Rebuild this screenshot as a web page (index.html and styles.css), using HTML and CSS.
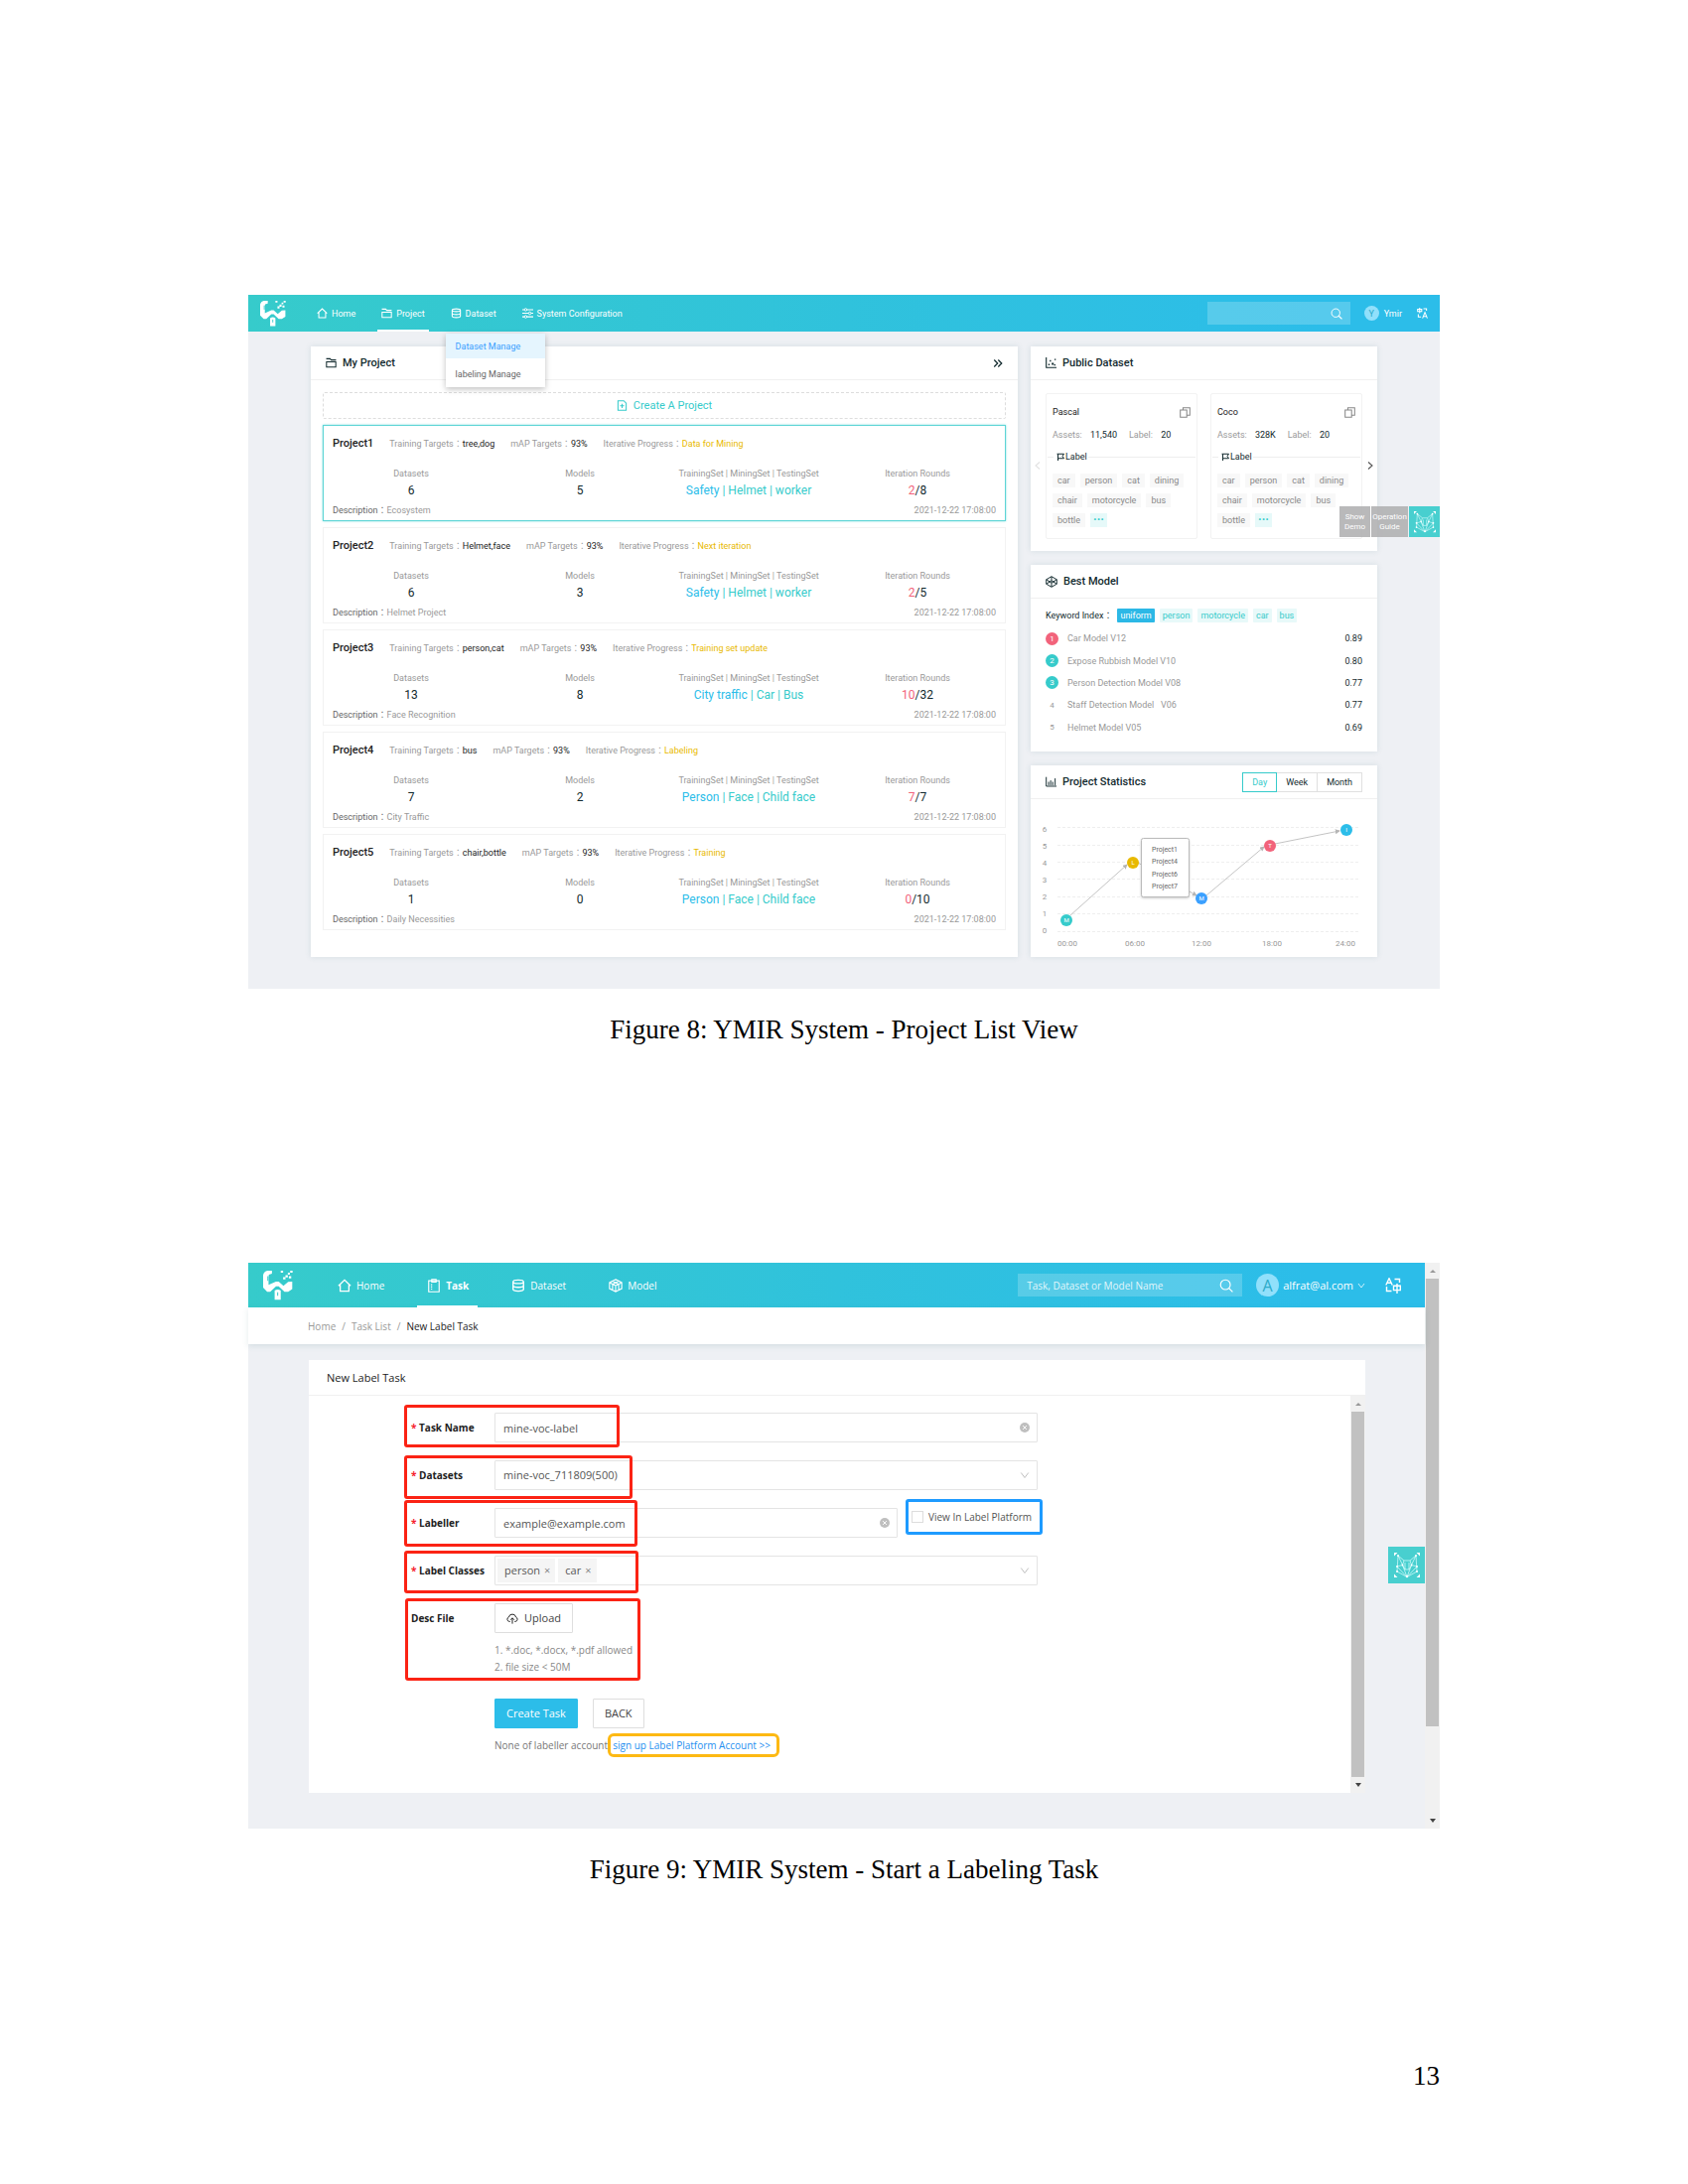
FILE: index.html
```html
<!DOCTYPE html>
<html lang="en">
<head>
<meta charset="utf-8">
<meta name="viewport" content="width=device-width, initial-scale=1">
<title>YMIR System - Figures</title>
<link rel="stylesheet" href="styles.css">
</head>
<body>
<svg class="defs" aria-hidden="true">
  <symbol id="logo" viewBox="0 0 88 88">
    <path d="M0 13Q2 2 13 0H26V9L17 12L16 18V42L38 32H46L60 45L74 33L86 32V54L74 62H63L46 46H38L21 62H12L0 50Z" fill="#fff"/>
    <path d="M52 0h7v6h-7zM66 13h7v7h-7zM59 19h7v7h-7zM73 6h6v6h-6zM80 0h7v6h-7zM76 16h7v7h-7z" fill="#fff"/>
    <path d="M34 59Q43 52 52 59V86H34Z" fill="#fff"/>
    <path d="M43 64V74M14 16V30" stroke="#38c9cc" stroke-width="3"/>
  </symbol>
  <symbol id="home" viewBox="0 0 16 16"><path d="M1 8.2L8 1.5L15 8.2M3 7V14.5H13V7" fill="none" stroke="currentColor" stroke-width="1.5"/></symbol>
  <symbol id="folder" viewBox="0 0 16 16"><path d="M.8 2H6.500L8 3.800H15.200M1.200 6.500H14.800V14.200H1.200Z" fill="none" stroke="currentColor" stroke-width="1.5"/></symbol>
  <symbol id="db" viewBox="0 0 16 16"><path d="M2 3.6C2 .9 14 .9 14 3.6V12.4C14 15.1 2 15.1 2 12.4ZM2 3.6C2 6.3 14 6.3 14 3.6M2 8C2 10.7 14 10.7 14 8" fill="none" stroke="currentColor" stroke-width="1.6"/></symbol>
  <symbol id="sliders" viewBox="0 0 16 16"><path d="M0 2.8H3M7 2.8H16M0 8H9M13 8H16M0 13.2H3M7 13.2H16" stroke="currentColor" stroke-width="1.6"/><g fill="none" stroke="currentColor" stroke-width="1.4"><circle cx="5" cy="2.8" r="1.8"/><circle cx="11" cy="8" r="1.8"/><circle cx="5" cy="13.2" r="1.8"/></g></symbol>
  <symbol id="search" viewBox="0 0 16 16"><circle cx="7" cy="7" r="5.6" fill="none" stroke="currentColor" stroke-width="1.3"/><path d="M11 11L15.3 15.3" stroke="currentColor" stroke-width="1.5"/></symbol>
  <symbol id="lang" viewBox="0 0 16 16"><path d="M4 0V8M1 2.2H7V5.4H1ZM9.5 1.5H14V4.5M2 9.5V13.5H6M8.2 15.5L11.7 6.8L15.2 15.5M9.5 12.6H14" fill="none" stroke="currentColor" stroke-width="1.5"/></symbol>
  <symbol id="lang2" viewBox="0 0 16 16"><path d="M.8 7.5L4 .8L7.2 7.5M2 5.3H6M9.5 1.5H14.5V5M1.5 9V13.5H6.5M12 6V16M8.5 8.3H15.3V12.6H8.5Z" fill="none" stroke="currentColor" stroke-width="1.4"/></symbol>
  <symbol id="more" viewBox="0 0 16 16"><path d="M2 2.5L7.5 8L2 13.5M8.5 2.5L14 8L8.5 13.5" fill="none" stroke="currentColor" stroke-width="2"/></symbol>
  <symbol id="newfile" viewBox="0 0 16 16"><path d="M2 1H10.5L14 4.5V15H2ZM8 5.5V11.5M5 8.5H11" fill="none" stroke="currentColor" stroke-width="1.5"/></symbol>
  <symbol id="scatter" viewBox="0 0 16 16"><path d="M1 0V15H16" fill="none" stroke="currentColor" stroke-width="1.6"/><path d="M4 9.500h2v2h-2zM6 4h2v2h-2zM9 8h3v3h-3zM13 2h2v2h-2zM12.500 10h2v2h-2z" fill="currentColor"/></symbol>
  <symbol id="bars" viewBox="0 0 16 16"><path d="M1 1V14.500H16M4.500 13V8M7.500 13V6M10.500 13V8M14 13V3" fill="none" stroke="currentColor" stroke-width="1.4"/></symbol>
  <symbol id="copy" viewBox="0 0 16 16"><path d="M1 4.500H10.500V15H1ZM5 4V1H15V12H11" fill="none" stroke="currentColor" stroke-width="1.5"/></symbol>
  <symbol id="flag" viewBox="0 0 16 16"><path d="M3 16V2.500M1 2.500H15L12 7L15 11.500H3" fill="none" stroke="currentColor" stroke-width="2"/></symbol>
  <symbol id="hex" viewBox="0 0 16 16"><path d="M8 1L15 5V11L8 15L1 11V5ZM1 5L8 9.500L15 5M1 11L8 6.500L15 11M8 1V6.500M8 9.500V15" fill="none" stroke="currentColor" stroke-width="1.3"/></symbol>
  <symbol id="cube" viewBox="0 0 16 16"><path d="M8 1L15 4.500V11.500L8 15L1 11.500V4.500ZM1 4.500L8 8L15 4.500M8 8V15M4.500 2.800L11.500 6.500V13M11.500 2.800L4.500 6.500V13" fill="none" stroke="currentColor" stroke-width="1.3"/></symbol>
  <symbol id="clip" viewBox="0 0 16 16"><path d="M2 2.500H14V15.200H2ZM5.500 .8H10.500V4H5.500ZM4.500 7H6M4.500 9.500H6M4.500 12H6" fill="none" stroke="currentColor" stroke-width="1.3"/></symbol>
  <symbol id="down" viewBox="0 0 16 16"><path d="M2 4L8 12L14 4" fill="none" stroke="currentColor" stroke-width="1.500"/></symbol>
  <symbol id="right" viewBox="0 0 16 16"><path d="M4 1L12 8L4 15" fill="none" stroke="currentColor" stroke-width="2.200"/></symbol>
  <symbol id="left" viewBox="0 0 16 16"><path d="M12 1L4 8L12 15" fill="none" stroke="currentColor" stroke-width="2.200"/></symbol>
  <symbol id="clear" viewBox="0 0 16 16"><circle cx="8" cy="8" r="8" fill="#bfbfbf"/><path d="M5 5L11 11M11 5L5 11" stroke="#fff" stroke-width="1.500"/></symbol>
  <symbol id="cloud" viewBox="0 0 16 16"><path d="M5 12.500H3.800A3 3 0 0 1 3.200 6.700A4.900 4.900 0 0 1 12.800 6.700A3 3 0 0 1 12.200 12.500H11M8 15.500V8M5.500 10.300L8 7.700L10.500 10.300" fill="none" stroke="currentColor" stroke-width="1.300"/></symbol>
  <symbol id="fox" viewBox="0 0 26 26">
    <path d="M0 0H3.500L0 3.500ZM26 0H22.500L26 3.500ZM0 25H3.500L0 21.500ZM26 25H22.500L26 21.500Z" fill="#fff"/>
    <path d="M4 3L3 19L13 24.500L23 19L22 3L16 8H10ZM4 3L8.500 12.500L10 8M22 3L17.500 12.500L16 8M3 14L8.500 12.500L11 17M23 14L17.500 12.500L15 17M3 14L13 24.500L23 14M11 10V17H15V10M8.500 12.500L13 24.500L17.500 12.500" fill="none" stroke="#dff" stroke-width=".7"/>
    <g fill="#fff"><circle cx="4" cy="3" r="1"/><circle cx="22" cy="3" r="1"/><circle cx="3" cy="14" r="1"/><circle cx="23" cy="14" r="1"/><circle cx="3" cy="19" r="1"/><circle cx="23" cy="19" r="1"/><circle cx="13" cy="24" r="1.200"/><circle cx="8.500" cy="12.500" r=".9"/><circle cx="17.500" cy="12.500" r=".9"/></g>
  </symbol>
</svg>

<main class="page">
  <figure class="figure">
    <div class="app dash">
      <header class="bar">
        <svg class="logo"><use href="#logo"/></svg>
        <nav class="nav">
          <a href="#"><svg class="i11"><use href="#home"/></svg>Home</a>
          <a href="#" class="active"><svg class="i11"><use href="#folder"/></svg>Project</a>
          <div class="nav-drop">
            <a href="#"><svg class="i11"><use href="#db"/></svg>Dataset</a>
            <div class="menu">
              <a href="#" class="selected">Dataset Manage</a>
              <a href="#">labeling Manage</a>
            </div>
          </div>
          <a href="#"><svg class="i11"><use href="#sliders"/></svg>System Configuration</a>
        </nav>
        <label class="search"><input type="text" aria-label="Search"><svg class="i12"><use href="#search"/></svg></label>
        <a href="#" class="user"><span class="avatar">Y</span>Ymir</a>
        <button class="plain" aria-label="Language"><svg class="i11"><use href="#lang"/></svg></button>
      </header>

      <div class="dash-body">
        <section class="panel">
          <h2 class="panel-head"><svg class="i11"><use href="#folder"/></svg>My Project<a href="#" class="push" aria-label="More"><svg class="i10"><use href="#more"/></svg></a></h2>
          <div class="projects">
            <button class="create"><svg class="i11"><use href="#newfile"/></svg>Create A Project</button>

            <article class="project current">
              <div class="project-head"><h3>Project1</h3><span>Training Targets：<b>tree,dog</b></span><span>mAP Targets：<b>93%</b></span><span>Iterative Progress：<em>Data for Mining</em></span></div>
              <dl class="stats">
                <div><dt>Datasets</dt><dd>6</dd></div><div><dt>Models</dt><dd>5</dd></div>
                <div><dt>TrainingSet | MiningSet | TestingSet</dt><dd class="sets"><i>Safety</i> | Helmet | worker</dd></div>
                <div><dt>Iteration Rounds</dt><dd><i class="round">2</i>/8</dd></div>
              </dl>
              <div class="project-foot"><span>Description：<i>Ecosystem</i></span><time>2021-12-22 17:08:00</time></div>
            </article>

            <article class="project">
              <div class="project-head"><h3>Project2</h3><span>Training Targets：<b>Helmet,face</b></span><span>mAP Targets：<b>93%</b></span><span>Iterative Progress：<em>Next iteration</em></span></div>
              <dl class="stats">
                <div><dt>Datasets</dt><dd>6</dd></div><div><dt>Models</dt><dd>3</dd></div>
                <div><dt>TrainingSet | MiningSet | TestingSet</dt><dd class="sets"><i>Safety</i> | Helmet | worker</dd></div>
                <div><dt>Iteration Rounds</dt><dd><i class="round">2</i>/5</dd></div>
              </dl>
              <div class="project-foot"><span>Description：<i>Helmet Project</i></span><time>2021-12-22 17:08:00</time></div>
            </article>

            <article class="project">
              <div class="project-head"><h3>Project3</h3><span>Training Targets：<b>person,cat</b></span><span>mAP Targets：<b>93%</b></span><span>Iterative Progress：<em>Training set update</em></span></div>
              <dl class="stats">
                <div><dt>Datasets</dt><dd>13</dd></div><div><dt>Models</dt><dd>8</dd></div>
                <div><dt>TrainingSet | MiningSet | TestingSet</dt><dd class="sets"><i>City traffic</i> | Car | Bus</dd></div>
                <div><dt>Iteration Rounds</dt><dd><i class="round">10</i>/32</dd></div>
              </dl>
              <div class="project-foot"><span>Description：<i>Face Recognition</i></span><time>2021-12-22 17:08:00</time></div>
            </article>

            <article class="project">
              <div class="project-head"><h3>Project4</h3><span>Training Targets：<b>bus</b></span><span>mAP Targets：<b>93%</b></span><span>Iterative Progress：<em>Labeling</em></span></div>
              <dl class="stats">
                <div><dt>Datasets</dt><dd>7</dd></div><div><dt>Models</dt><dd>2</dd></div>
                <div><dt>TrainingSet | MiningSet | TestingSet</dt><dd class="sets"><i>Person</i> | Face | Child face</dd></div>
                <div><dt>Iteration Rounds</dt><dd><i class="round">7</i>/7</dd></div>
              </dl>
              <div class="project-foot"><span>Description：<i>City Traffic</i></span><time>2021-12-22 17:08:00</time></div>
            </article>

            <article class="project">
              <div class="project-head"><h3>Project5</h3><span>Training Targets：<b>chair,bottle</b></span><span>mAP Targets：<b>93%</b></span><span>Iterative Progress：<em>Training</em></span></div>
              <dl class="stats">
                <div><dt>Datasets</dt><dd>1</dd></div><div><dt>Models</dt><dd>0</dd></div>
                <div><dt>TrainingSet | MiningSet | TestingSet</dt><dd class="sets"><i>Person</i> | Face | Child face</dd></div>
                <div><dt>Iteration Rounds</dt><dd><i class="round">0</i>/10</dd></div>
              </dl>
              <div class="project-foot"><span>Description：<i>Daily Necessities</i></span><time>2021-12-22 17:08:00</time></div>
            </article>
          </div>
        </section>

        <div class="side">
          <section class="panel">
            <h2 class="panel-head"><svg class="i11"><use href="#scatter"/></svg>Public Dataset</h2>
            <div class="carousel">
              <button class="plain arrow prev" aria-label="Previous"><svg class="i8"><use href="#left"/></svg></button>
              <article class="dataset">
                <h3>Pascal<svg class="i11"><use href="#copy"/></svg></h3>
                <p class="counts">Assets: <b>11,540</b><span>Label: <b>20</b></span></p>
                <h4><svg class="i8"><use href="#flag"/></svg>Label</h4>
                <ul class="tags"><li>car</li><li>person</li><li>cat</li><li>dining</li><li>chair</li><li>motorcycle</li><li>bus</li><li>bottle</li><li class="etc">···</li></ul>
              </article>
              <article class="dataset">
                <h3>Coco<svg class="i11"><use href="#copy"/></svg></h3>
                <p class="counts">Assets: <b>328K</b><span>Label: <b>20</b></span></p>
                <h4><svg class="i8"><use href="#flag"/></svg>Label</h4>
                <ul class="tags"><li>car</li><li>person</li><li>cat</li><li>dining</li><li>chair</li><li>motorcycle</li><li>bus</li><li>bottle</li><li class="etc">···</li></ul>
              </article>
              <button class="plain arrow next" aria-label="Next"><svg class="i8"><use href="#right"/></svg></button>
            </div>
          </section>

          <section class="panel">
            <h2 class="panel-head"><svg class="i12"><use href="#hex"/></svg>Best Model</h2>
            <div class="best">
              <div class="keywords"><span>Keyword Index：</span><button class="on">uniform</button><button>person</button><button>motorcycle</button><button>car</button><button>bus</button></div>
              <ol class="ranks">
                <li><span class="rank first">1</span>Car Model V12<b>0.89</b></li>
                <li><span class="rank top">2</span>Expose Rubbish Model V10<b>0.80</b></li>
                <li><span class="rank top">3</span>Person Detection Model V08<b>0.77</b></li>
                <li><span class="rank">4</span>Staff Detection Model &nbsp; V06<b>0.77</b></li>
                <li><span class="rank">5</span>Helmet Model V05<b>0.69</b></li>
              </ol>
            </div>
          </section>

          <section class="panel">
            <h2 class="panel-head"><svg class="i11"><use href="#bars"/></svg>Project Statistics
              <span class="range push">
                <label><input type="radio" name="range" checked>Day</label><label><input type="radio" name="range">Week</label><label><input type="radio" name="range">Month</label>
              </span>
            </h2>
            <svg class="chart" viewBox="0 0 349 159" role="img" aria-label="Project statistics by time of day">
              <defs><marker id="tip" viewBox="0 0 6 6" refX="5" refY="3" markerWidth="5" markerHeight="5" orient="auto"><path d="M0 0L6 3L0 6Z" fill="#b5b5b5"/></marker></defs>
              <path class="grid" d="M27 28.500H331M27 46.500H331M27 63.500H331M27 80.500H331M27 98.500H331M27 115.500H331M27 133.500H331"/>
              <g class="axis" text-anchor="middle">
                <text x="14" y="33">6</text><text x="14" y="50">5</text><text x="14" y="67">4</text><text x="14" y="84">3</text><text x="14" y="101">2</text><text x="14" y="118">1</text><text x="14" y="135">0</text>
                <text x="37" y="148">00:00</text><text x="105" y="148">06:00</text><text x="172" y="148">12:00</text><text x="243" y="148">18:00</text><text x="317" y="148">24:00</text>
              </g>
              <g class="flow"><path d="M40 117L97 66"/><path d="M108 64L167 97"/><path d="M177 97L235 48"/><path d="M246 45L311 32"/></g>
              <g class="nodes" text-anchor="middle">
                <circle cx="36" cy="122" r="6" fill="#36cbcb"/><text x="36" y="124">M</text>
                <circle cx="103" cy="64" r="6" fill="#e8b900"/><text x="103" y="66">L</text>
                <circle cx="172" cy="100" r="6" fill="#3ba0ff"/><text x="172" y="102">M</text>
                <circle cx="241" cy="47" r="6" fill="#f2637b"/><text x="241" y="49">T</text>
                <circle cx="318" cy="31" r="6" fill="#2cbde9"/><text x="318" y="33">I</text>
              </g>
              <g class="tooltip"><rect x="111.500" y="39.500" width="48" height="59" rx="2"/><text x="122" y="53">Project1</text><text x="122" y="65">Project4</text><text x="122" y="78">Project6</text><text x="122" y="90">Project7</text></g>
            </svg>
          </section>
        </div>
      </div>

      <div class="guide">
        <button>Show Demo</button><button>Operation Guide</button><button class="mascot" aria-label="Assistant"><svg class="i22"><use href="#fox"/></svg></button>
      </div>
    </div>
    <figcaption>Figure 8: YMIR System - Project List View</figcaption>
  </figure>

  <figure class="figure">
    <div class="app task">
      <div class="task-page">
        <header class="bar">
          <svg class="logo"><use href="#logo"/></svg>
          <nav class="nav">
            <a href="#"><svg class="i14"><use href="#home"/></svg>Home</a>
            <a href="#" class="active"><svg class="i14"><use href="#clip"/></svg>Task</a>
            <a href="#"><svg class="i14"><use href="#db"/></svg>Dataset</a>
            <a href="#"><svg class="i14"><use href="#cube"/></svg>Model</a>
          </nav>
          <label class="search"><input type="text" placeholder="Task, Dataset or Model Name" aria-label="Search"><svg class="i14"><use href="#search"/></svg></label>
          <a href="#" class="user"><span class="avatar">A</span>alfrat@al.com<svg class="i8"><use href="#down"/></svg></a>
          <button class="plain" aria-label="Language"><svg class="i16"><use href="#lang2"/></svg></button>
        </header>
        <nav class="crumbs"><a href="#">Home</a><span>/</span><a href="#">Task List</a><span>/</span><b>New Label Task</b></nav>
        <div class="task-main">
          <section class="form-panel">
            <h2>New Label Task</h2>
            <div class="form-wrap">
              <form class="form">
                <div class="row">
                  <label for="name" class="req">Task Name</label>
                  <div class="field"><input id="name" type="text" value="mine-voc-label"><svg class="i10"><use href="#clear"/></svg></div>
                  <span class="mark mark-name"></span>
                </div>
                <div class="row">
                  <label for="sets" class="req">Datasets</label>
                  <div class="field"><select id="sets"><option>mine-voc_711809(500)</option></select><svg class="i10"><use href="#down"/></svg></div>
                  <span class="mark mark-sets"></span>
                </div>
                <div class="row">
                  <label for="labeller" class="req">Labeller</label>
                  <div class="pair">
                    <div class="field"><input id="labeller" type="text" value="example@example.com"><svg class="i10"><use href="#clear"/></svg></div>
                    <label class="check"><input type="checkbox">View In Label Platform</label>
                  </div>
                  <span class="mark mark-labeller"></span>
                </div>
                <div class="row">
                  <label for="classes" class="req">Label Classes</label>
                  <div class="field chips"><span class="chip">person<button type="button" aria-label="Remove person">×</button></span><span class="chip">car<button type="button" aria-label="Remove car">×</button></span><input id="classes" type="text"><svg class="i10"><use href="#down"/></svg></div>
                  <span class="mark mark-classes"></span>
                </div>
                <div class="row">
                  <label for="upload">Desc File</label>
                  <div>
                    <button type="button" id="upload" class="btn"><svg class="i12"><use href="#cloud"/></svg>Upload</button>
                    <p class="hint">1. *.doc, *.docx, *.pdf allowed<br>2. file size &lt; 50M</p>
                  </div>
                  <span class="mark mark-file"></span>
                </div>
                <div class="actions">
                  <div class="buttons"><button type="button" class="btn primary">Create Task</button><button type="button" class="btn">BACK</button></div>
                  <p class="note">None of labeller account, <a href="#">sign up Label Platform Account &gt;&gt;</a></p>
                </div>
              </form>
              <div class="scroll inner"><span class="up"></span><i class="thumb"></i><span class="down"></span></div>
            </div>
          </section>
        </div>
        <button class="mascot float" aria-label="Assistant"><svg class="i26"><use href="#fox"/></svg></button>
      </div>
      <div class="scroll outer"><span class="up"></span><i class="thumb"></i><i class="rest"></i><span class="down"></span></div>
    </div>
    <figcaption>Figure 9: YMIR System - Start a Labeling Task</figcaption>
  </figure>

  <footer class="folio">13</footer>
</main>
</body>
</html>
```

FILE: styles.css
```css
* { box-sizing: border-box; }
body { margin: 0; background: #fff; color: #000; }
h2, h3, h4, p, ul, ol, dl, dd, figure { margin: 0; padding: 0; }
h2, h3, h4 { font-weight: 500; }
ul, ol { list-style: none; }
i, em { font-style: normal; }
a { color: inherit; text-decoration: none; }
button, input, select { margin: 0; padding: 0; border: 0; background: none; font: inherit; color: inherit; outline: 0; }
button { cursor: pointer; }
svg { display: block; flex: none; }

.defs { position: absolute; width: 0; height: 0; }
.i8 { width: 8px; height: 8px; }
.i10 { width: 10px; height: 10px; }
.i11 { width: 11px; height: 11px; }
.i12 { width: 12px; height: 12px; }
.i14 { width: 14px; height: 14px; }
.i16 { width: 16px; height: 16px; }
.i22 { width: 22px; height: 22px; }
.i26 { width: 26px; height: 26px; }

.page { max-width: 1200px; margin: 0 auto; padding: 297px 0 91px; }
.figure + .figure { margin-top: 217px; }
figcaption, .folio { font: 27px/36px "Liberation Serif", serif; }
figcaption { margin-top: 23px; text-align: center; }
.folio { margin-top: 172px; text-align: right; }

.app { position: relative; background: #eef0f4; }
.plain { display: grid; place-items: center; }
.push { margin-left: auto; }

/* top bar */
.bar { display: flex; align-items: center; background: linear-gradient(90deg, #36cbcb, #30c2dc 50%, #2cbde9 90%); color: #fff; }
.nav { display: flex; align-self: stretch; }
.nav a { display: flex; align-items: center; white-space: nowrap; }
.nav > .active { border-top: 2px solid transparent; border-bottom: 2px solid #fff; }
.search { display: flex; align-items: center; margin-left: auto; background: rgba(255, 255, 255, .2); }
.search input { flex: 1; min-width: 0; }
.search input::placeholder { color: rgba(255, 255, 255, .85); }
.user { display: flex; align-items: center; }
.avatar { display: grid; place-items: center; border-radius: 50%; background: #91e0fb; color: #2cabc9; }

/* project dashboard */
.dash { font: 9px/16px Roboto, "Noto Sans CJK TC", sans-serif; color: #999; }
.dash .bar { height: 37px; padding: 0 12px; }
.dash .logo { width: 26px; height: 26px; }
.dash .nav { gap: 18px; margin-left: 27px; }
.dash .nav a { gap: 4px; padding: 0 4px; }
.dash .search { width: 144px; height: 23px; padding-right: 8px; }
.dash .user { gap: 5px; margin: 0 15px 0 14px; }
.dash .avatar { width: 15px; height: 15px; }

.nav-drop { position: relative; display: flex; }
.dash .menu { position: absolute; z-index: 2; top: 39px; left: -1px; width: 100px; background: #fff; box-shadow: 0 2px 6px rgba(0, 0, 0, .25); color: #666; }
.dash .menu a { height: 26px; margin-top: 3px; padding: 0 10px; }
.dash .menu .selected { height: 25px; margin-top: 0; background: #e5f5fe; color: #3ba0ff; }

.dash-body { display: grid; grid-template-columns: 712fr 349fr; gap: 13px; padding: 15px 63px 32px; }
.side { display: flex; flex-direction: column; gap: 14px; min-width: 0; }
.panel { background: #fff; box-shadow: 0 0 6px rgba(60, 110, 120, .14); }
.panel-head { display: flex; align-items: center; gap: 6px; height: 34px; padding: 0 15px; border-bottom: 1px solid #f0f0f0; font-size: 11px; color: #122a2e; }

.projects { display: flex; flex-direction: column; gap: 6px; padding: 12px 12px 27px; }
.create { display: flex; align-items: center; justify-content: center; gap: 6px; height: 27px; border: 1px dashed #ddd; border-radius: 2px; font-size: 11px; color: #36cbcb; }
.project { height: 97px; padding-top: 10px; border: 1px solid #f2f2f2; }
.project.current { border-color: #5ed5d6; box-shadow: 0 0 2px #7fdede; }
.project-head { display: flex; align-items: center; gap: 16px; padding: 0 9px; white-space: nowrap; }
.project-head h3 { font-size: 11px; color: #222; }
.project-head b { font-weight: 400; color: #222; }
.project-head em { color: #e8b900; }
.stats { display: grid; grid-template-columns: repeat(4, 1fr); margin-top: 14px; padding: 0 3px; text-align: center; white-space: nowrap; }
.stats dd { line-height: 18px; font-size: 12px; color: #122a2e; }
.stats .sets { color: #36cbcb; }
.stats .sets i { color: #2cbde9; }
.stats .round { color: #f2637b; }
.project-foot { display: flex; justify-content: space-between; margin-top: 3px; padding: 0 9px; color: #666; }
.project-foot i, .project-foot time { color: #999; }

.carousel { position: relative; display: grid; grid-template-columns: 1fr 1fr; gap: 13px; padding: 13px 15px 12px; }
.arrow { position: absolute; top: 82px; }
.prev { left: 3px; color: #e2e2e2; }
.next { right: 3px; color: #555; }
.dataset { padding: 10px 1px 11px; border: 1px solid #f2f2f2; border-radius: 2px; }
.dataset h3 { display: flex; justify-content: space-between; align-items: center; padding: 0 5px; font-size: 9px; font-weight: 400; color: #222; }
.dataset h3 svg { color: #888; }
.counts { margin-top: 7px; padding: 0 5px; white-space: nowrap; }
.counts b { margin-left: 6px; font-weight: 400; color: #122a2e; }
.counts span { margin-left: 12px; }
.dataset h4 { display: flex; align-items: center; gap: 1px; margin-top: 6px; font-size: 9px; font-weight: 400; color: #122a2e; }
.dataset h4::before, .dataset h4::after { content: ""; height: 1px; background: #eee; }
.dataset h4::before { width: 6px; margin-right: 2px; }
.dataset h4::after { flex: 1; }
.tags { display: flex; flex-wrap: wrap; gap: 6px 5px; margin-top: 9px; padding: 0 5px; }
.tags li { padding: 0 5px; background: #f8f8f8; line-height: 14px; color: #888; }
.tags .etc { padding: 0 3px; background: #e6f9f9; font-size: 12px; color: #36cbcb; font-weight: 700; }

.best { padding: 9px 15px 13px; }
.keywords { display: flex; align-items: center; gap: 5px; height: 16px; color: #122a2e; }
.keywords button { height: 14px; padding: 0 3px; border-radius: 1px; background: #e8f9f9; line-height: 14px; color: #36cbcb; }
.keywords .on { background: #2cb8e6; color: #fff; }
.ranks { display: grid; grid-auto-rows: 1fr; min-height: 112px; margin-top: 4px; }
.ranks li { display: flex; align-items: center; }
.ranks b { margin-left: auto; font-weight: 400; color: #122a2e; }
.rank { width: 13px; height: 13px; margin-right: 9px; border-radius: 50%; text-align: center; font-size: 8px; line-height: 13px; }
.first { background: #f2637b; color: #fff; }
.top { background: #36cbcb; color: #fff; }

.range { display: flex; font-size: 9px; font-weight: 400; }
.range label { height: 20px; margin-left: -1px; padding: 0 9px; border: 1px solid #e0e0e0; line-height: 18px; cursor: pointer; }
.range input { position: absolute; appearance: none; }
.range label:has(:checked) { z-index: 1; border-color: #36cbcb; color: #36cbcb; }
.chart { width: 100%; height: auto; font-size: 8px; }
.grid { stroke: #eee; stroke-dasharray: 3 2; }
.axis { fill: #999; }
.flow { fill: none; stroke: #c4c4c4; }
.flow path { marker-end: url(#tip); }
.nodes text { fill: #fff; font-size: 6px; }
.tooltip rect { fill: #fff; stroke: #bbb; filter: drop-shadow(0 1px 1px rgba(0, 0, 0, .2)); }
.tooltip text { fill: #666; font-size: 7px; }

.guide { position: absolute; z-index: 2; right: 0; top: 213px; display: flex; gap: 1px; }
.guide button { width: 31px; height: 31px; background: rgba(175, 175, 177, .88); font-size: 8px; line-height: 10px; color: #fff; }
.guide button:nth-child(2) { width: 37px; }
.guide .mascot, .mascot { display: grid; place-items: center; background: #48cfcf; }

/* labeling task page */
.task { display: flex; font: 10px/16px "Open Sans", "Noto Sans", sans-serif; color: #555; }
.task-page { position: relative; flex: 1; min-width: 0; }
.task .bar { height: 45px; padding: 0 24px 0 15px; }
.task .logo { width: 30px; height: 30px; }
.task .nav { gap: 24px; margin-left: 35px; }
.task .nav a { gap: 5px; padding: 0 9px 0 10px; }
.task .nav .active { font-weight: 700; }
.task .search { width: 226px; height: 23px; padding: 0 9px; }
.task .user { gap: 4px; margin: 0 20px 0 14px; font-size: 11px; }
.task .avatar { width: 23px; height: 23px; font-size: 16px; }
.crumbs { display: flex; align-items: center; gap: 6px; height: 37px; padding: 0 60px; background: #fff; box-shadow: 0 2px 6px rgba(60, 110, 120, .14); color: #999; }
.crumbs b { font-weight: 400; color: #222; }
.task-main { padding: 16px 60px 36px 61px; }
.form-panel { background: #fff; }
.form-panel h2 { height: 36px; padding: 0 18px; border-bottom: 1px solid #f0f0f0; font-size: 11px; line-height: 36px; color: #222; }
.form-wrap { display: flex; }
.form { display: flex; flex: 1; flex-direction: column; gap: 18px; min-width: 0; padding: 17px 0 40px 103px; }
.row { position: relative; display: grid; grid-template-columns: 84px minmax(0, 547px); }
.row > label { line-height: 30px; font-weight: 700; color: #222; white-space: nowrap; }
.req::before { content: "* "; color: #f5222d; }
.field { display: flex; align-items: center; height: 30px; padding: 0 7px 0 8px; border: 1px solid #e4e4e4; border-radius: 1px; background: #fff; font-size: 11px; color: #555; }
.field input, .field select { flex: 1; min-width: 0; height: 100%; appearance: none; }
.field svg { color: #bbb; }
.pair { display: grid; grid-template-columns: 407fr 140fr; }
.pair .field { margin-right: 1px; }
.check { display: flex; align-items: center; align-self: start; gap: 5px; height: 36px; margin: -9px -5px 0 7px; padding: 0 3px; border: 3px solid #1e9bff; border-radius: 3px; white-space: nowrap; }
.check input { flex: none; width: 12px; height: 12px; appearance: none; border: 1px solid #ddd; }
.chips { gap: 3px; padding-left: 2px; }
.chip { display: flex; gap: 4px; height: 24px; padding: 0 5px 0 7px; background: #f5f5f5; line-height: 24px; }
.chip button { color: #888; }
.btn { display: inline-flex; align-items: center; gap: 6px; height: 30px; padding: 0 11px; border: 1px solid #dedede; border-radius: 1px; background: #fff; font-size: 11px; color: #444; }
.btn svg { color: #222; }
.btn.primary { border-color: #2cbde9; background: #2cbde9; color: #fff; }
.hint { margin-top: 9px; line-height: 17px; color: #888; }
.row > div > .btn { display: flex; }
.actions { padding: 5px 0 0 84px; }
.buttons { display: flex; gap: 15px; }
.note { margin-top: 9px; color: #777; }
.note a { outline: 3px solid #fdb913; outline-offset: 2px; padding-right: 4px; border-radius: 1px; color: #1e90f0; }

/* annotation frames drawn over the form */
.mark { position: absolute; top: -8px; bottom: -5px; left: -7px; border: 3px solid #fb2314; border-radius: 3px; pointer-events: none; }
.mark-name { width: 217px; }
.mark-sets { top: -5px; bottom: -9px; width: 230px; }
.mark-labeller { bottom: -9px; width: 235px; }
.mark-classes { top: -5px; bottom: -8px; width: 236px; }
.mark-file { top: -5px; left: -6px; width: 237px; }

.scroll { display: flex; flex: none; flex-direction: column; align-items: center; width: 15px; background: #f1f1f1; }
.scroll .up, .scroll .down { height: 16px; display: grid; place-items: center; }
.up::before, .down::before { content: ""; border: 3px solid transparent; border-top-width: 0; border-bottom: 3px solid #999; }
.down::before { border-top: 4px solid #444; border-bottom-width: 0; }
.thumb { flex: 451; width: 13px; background: #c1c1c1; }
.rest { flex: 87; }
.float { position: absolute; right: 0; top: 286px; width: 37px; height: 37px; }
```
